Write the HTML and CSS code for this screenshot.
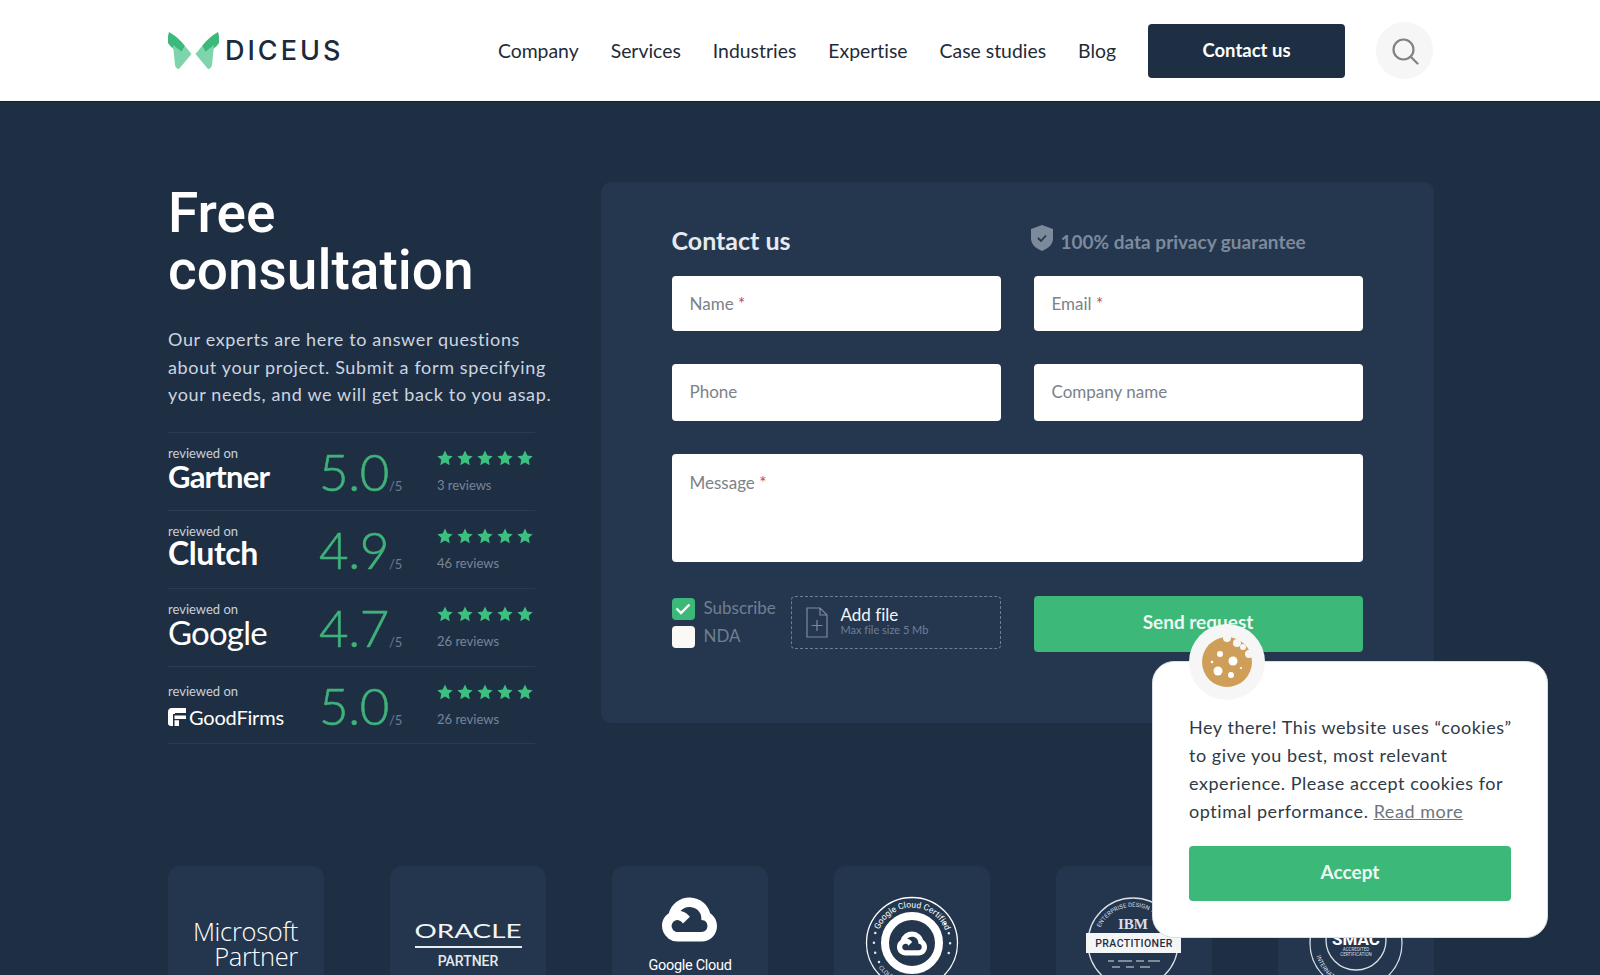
FILE: index.html
```html
<!DOCTYPE html>
<html lang="en">
<head>
<meta charset="utf-8">
<title>DICEUS - Free consultation</title>
<link rel="stylesheet" href="styles.css">
</head>
<body>
<svg class="defs" width="0" height="0" aria-hidden="true">
  <defs>
    <symbol id="star" viewBox="0 0 24 24"><path d="M12 .8l3.500 7.400 8 1-5.900 5.600 1.500 8L12 18.900l-7.100 3.900 1.500-8L.5 9.200l8-1z"/></symbol>
    <symbol id="gcloud" viewBox="0 2.300 24 19.400">
      <path fill="#fff" fill-rule="evenodd" d="M12.190 2.380a9.344 9.344 0 0 0-9.234 6.893c.053-.02-.055.013 0 0-3.875 2.551-3.922 8.110-.247 10.941l.006-.007-.007.030a6.717 6.717 0 0 0 4.077 1.356h5.173l.030.030h5.192c6.687.053 9.376-8.605 3.835-12.350a9.365 9.365 0 0 0-2.821-4.552l-.043.043.006-.050A9.344 9.344 0 0 0 12.190 2.380zm-.358 4.146c1.244-.04 2.518.368 3.486 1.150a5.186 5.186 0 0 1 1.862 4.078v.518c3.530-.07 3.530 5.262 0 5.193h-5.193l-.008.009v-.04H6.785a2.590 2.590 0 0 1-1.067-.23h.001a2.597 2.597 0 1 1 3.437-3.437l3.013-3.012A6.747 6.747 0 0 0 8.110 8.240c.018-.01.04-.026.054-.023a5.186 5.186 0 0 1 3.670-1.690z"/>
    </symbol>
  </defs>
</svg>

<header class="site-header">
  <div class="header-row">
    <a class="logo" href="#">
      <svg class="logo-mark" width="51" height="37" viewBox="0 0 51 37" aria-hidden="true">
        <path fill="#3db97c" d="M1 0Q10 5 17 14L14 20Q4 18 0 11Q-.5 5 1 0Z"/>
        <path fill="#7ed5ab" d="M5 13L14 20L17 14L23.500 22L11 37Q8 37 7 33Z"/>
        <path fill="#3db97c" d="M50 0Q41 5 34 14L37 20Q47 18 51 11Q51.500 5 50 0Z"/>
        <path fill="#7ed5ab" d="M46 13L37 20L34 14L27.500 22L40 37Q43 37 44 33Z"/>
      </svg>
      <span class="logo-text">DICEUS</span>
    </a>
    <nav class="main-nav">
      <a href="#">Company</a>
      <a href="#">Services</a>
      <a href="#">Industries</a>
      <a href="#">Expertise</a>
      <a href="#">Case studies</a>
      <a href="#">Blog</a>
    </nav>
    <a class="header-cta" href="#">Contact us</a>
    <button class="search-btn" type="button" aria-label="Search">
      <svg width="28" height="28" viewBox="0 0 28 28" fill="none" stroke="#7f8287" stroke-width="2.200" stroke-linecap="round" aria-hidden="true"><circle cx="12.500" cy="12.500" r="10"/><path d="M20 20l6.500 6.500"/></svg>
    </button>
  </div>
</header>

<main class="container">
  <section class="hero">
    <div class="intro">
      <h1>Free<br>consultation</h1>
      <p class="lead">Our experts are here to answer questions about your project. Submit a form specifying your needs, and we will get back to you asap.</p>
      <ul class="ratings">
        <li class="rating">
          <div class="brand"><small>reviewed on</small><strong class="brand-gartner">Gartner</strong></div>
          <div class="score">5.0<span>/5</span></div>
          <div class="stars-col"><div class="stars"><svg><use href="#star"/></svg><svg><use href="#star"/></svg><svg><use href="#star"/></svg><svg><use href="#star"/></svg><svg><use href="#star"/></svg></div><span class="count">3 reviews</span></div>
        </li>
        <li class="rating">
          <div class="brand"><small>reviewed on</small><strong class="brand-clutch">Clutch</strong></div>
          <div class="score">4.9<span>/5</span></div>
          <div class="stars-col"><div class="stars"><svg><use href="#star"/></svg><svg><use href="#star"/></svg><svg><use href="#star"/></svg><svg><use href="#star"/></svg><svg><use href="#star"/></svg></div><span class="count">46 reviews</span></div>
        </li>
        <li class="rating">
          <div class="brand"><small>reviewed on</small><strong class="brand-google">Google</strong></div>
          <div class="score">4.7<span>/5</span></div>
          <div class="stars-col"><div class="stars"><svg><use href="#star"/></svg><svg><use href="#star"/></svg><svg><use href="#star"/></svg><svg><use href="#star"/></svg><svg><use href="#star"/></svg></div><span class="count">26 reviews</span></div>
        </li>
        <li class="rating">
          <div class="brand brand-low"><small>reviewed on</small><strong class="brand-goodfirms"><svg width="18" height="18" viewBox="0 0 18 18" aria-hidden="true"><path fill="#fff" d="M4 0h14v5H7v2h11v4H11v7H3a3 3 0 0 1-3-3V4a4 4 0 0 1 4-4z"/><path fill="#1f2f43" d="M5 6h13v1.500H6.500V11H12v1.300H6.500V18H5z"/></svg>GoodFirms</strong></div>
          <div class="score">5.0<span>/5</span></div>
          <div class="stars-col"><div class="stars"><svg><use href="#star"/></svg><svg><use href="#star"/></svg><svg><use href="#star"/></svg><svg><use href="#star"/></svg><svg><use href="#star"/></svg></div><span class="count">26 reviews</span></div>
        </li>
      </ul>
    </div>

    <form class="contact-card">
      <div class="contact-head">
        <h2>Contact us</h2>
        <p class="privacy">
          <svg width="22" height="26" viewBox="0 0 22 26" aria-hidden="true"><path fill="#7c8a9c" d="M11 0l11 4v9c0 6-4 10-11 13C4 23 0 19 0 13V4z"/><path fill="none" stroke="#24374f" stroke-width="1.800" d="M7 13l3 3 5-5.500"/></svg>
          <span>100% data privacy guarantee</span>
        </p>
      </div>
      <div class="fields">
        <label class="field"><span>Name <em>*</em></span></label>
        <label class="field"><span>Email <em>*</em></span></label>
        <label class="field field-b"><span>Phone</span></label>
        <label class="field field-b"><span>Company name</span></label>
        <label class="field field-message"><span>Message <em>*</em></span></label>
        <div class="form-extras">
          <div class="checks">
            <label class="check"><span class="box box-on"><svg width="16" height="12" viewBox="0 0 16 12" fill="none" stroke="#fff" stroke-width="2.400" aria-hidden="true"><path d="M1.500 5.500l4.500 4.500 8.500-8.500"/></svg></span><span class="check-label">Subscribe</span></label>
            <label class="check"><span class="box"></span><span class="check-label">NDA</span></label>
          </div>
          <div class="add-file">
            <svg width="22" height="31" viewBox="0 0 22 31" fill="none" stroke="#7c8a9c" stroke-width="1.200" aria-hidden="true"><path d="M1 1h13l7 7v22H1zM14 1v7h7M11 13v11M5.500 18.500h11"/></svg>
            <div class="file-text"><b>Add file</b><small>Max file size 5 Mb</small></div>
          </div>
        </div>
        <button class="send" type="button">Send request</button>
      </div>
    </form>
  </section>

  <section class="partners">
    <div class="tile">
      <svg width="156" height="109" viewBox="0 0 156 109"><text class="t-ms" x="130" y="75" text-anchor="end">Microsoft</text><text class="t-ms" x="130" y="100" text-anchor="end">Partner</text></svg>
    </div>
    <div class="tile">
      <svg width="156" height="109" viewBox="0 0 156 109"><text class="t-oracle" x="78" y="72" text-anchor="middle" textLength="107" lengthAdjust="spacingAndGlyphs">ORACLE</text><rect x="25" y="80" width="107" height="2" fill="#e8edf2"/><text class="t-partner" x="78" y="100" text-anchor="middle">PARTNER</text></svg>
    </div>
    <div class="tile">
      <svg width="156" height="109" viewBox="0 0 156 109"><use href="#gcloud" x="50" y="31" width="55" height="45"/><text class="t-gc" x="78" y="104" text-anchor="middle">Google Cloud</text></svg>
    </div>
    <div class="tile">
      <svg width="156" height="109" viewBox="0 0 156 109">
        <defs>
          <path id="arc-a" d="M78 112.500a35.500 35.500 0 1 1 .1 0"/>
          <path id="arc-a2" d="M38 88a41.500 41.500 0 0 0 80 0"/>
        </defs>
        <circle class="ring" cx="78" cy="77" r="45.500"/>
        <circle cx="78" cy="77" r="27" fill="none" stroke="#fff" stroke-width="8"/>
        <path class="dots" d="M45 96A38 38 0 0 1 45 58"/>
        <path class="dots" d="M111 58A38 38 0 0 1 111 96"/>
        <text class="t-arc"><textPath href="#arc-a" startOffset="31%">Google Cloud Certified</textPath></text>
        <text class="t-arc2"><textPath href="#arc-a2" startOffset="14%">CLOUD ENGINEER</textPath></text>
        <use href="#gcloud" x="63" y="65" width="30" height="25"/>
      </svg>
    </div>
    <div class="tile">
      <svg width="156" height="109" viewBox="0 0 156 109">
        <defs><path id="arc-b" d="M43 65A36 36 0 0 1 111 65"/></defs>
        <circle class="ring ring-b" cx="77" cy="77" r="45"/>
        <text class="t-arc2"><textPath href="#arc-b" startOffset="4%">ENTERPRISE DESIGN THINKING</textPath></text>
        <text class="t-ibm" x="77" y="63" text-anchor="middle">IBM</text>
        <rect x="30" y="67" width="95" height="20" fill="#f3f5f7"/>
        <text class="t-prac" x="78" y="81" text-anchor="middle">PRACTITIONER</text>
        <path class="dash" d="M52 95h6M62 95h14M80 95h8M92 95h12M56 101h8M70 101h8M84 101h10"/>
      </svg>
    </div>
    <div class="tile">
      <svg width="156" height="109" viewBox="0 0 156 109">
        <defs><path id="arc-c" d="M38 88a41 41 0 0 0 80 0"/></defs>
        <circle class="ring ring-b" cx="78" cy="77" r="46"/>
        <circle class="ring ring-b" cx="78" cy="74" r="30"/>
        <text class="t-smac" x="78" y="79" text-anchor="middle">SMAC</text>
        <text class="t-mini" x="78" y="85" text-anchor="middle">ACCREDITED</text>
        <text class="t-mini" x="78" y="90" text-anchor="middle">CERTIFICATION</text>
        <text class="t-arc2"><textPath href="#arc-c" startOffset="2%">INTERNATIONAL INSTITUTE</textPath></text>
      </svg>
    </div>
  </section>
</main>

<aside class="cookie">
  <div class="cookie-badge">
    <svg width="50" height="50" viewBox="0 0 50 50" aria-hidden="true">
      <circle cx="25" cy="25" r="25" fill="#cf9f59"/>
      <g fill="#f6f6f6"><circle cx="25" cy="1" r="4"/><circle cx="35" cy="6" r="4"/><circle cx="41" cy="10" r="3"/><circle cx="47" cy="17" r="4"/></g>
      <g fill="#fff"><circle cx="18" cy="17" r="3"/><circle cx="31" cy="24" r="4.500"/><circle cx="16" cy="34" r="4.500"/><circle cx="29" cy="38" r="3"/><circle cx="10" cy="25" r="1.300"/><circle cx="39" cy="31" r="1.100"/></g>
    </svg>
  </div>
  <p>Hey there! This website uses “cookies” to give you best, most relevant experience. Please accept cookies for optimal performance. <a href="#">Read more</a></p>
  <button class="accept" type="button">Accept</button>
</aside>
</body>
</html>
```
FILE: styles.css
```css
* { box-sizing: border-box; }
html, body { margin: 0; height: 975px; overflow: hidden; }
body {
  background: #1f2f43;
  color: #fff;
  font-family: "Lato", sans-serif;
  font-variant-ligatures: none;
}
a { color: inherit; text-decoration: none; }
.defs { position: absolute; }
.container { width: 1266px; margin: 0 0 0 168px; }

.site-header {
  background: #fff;
  height: 102px;
  border-bottom: 1px solid #141d29;
}
.header-row {
  display: flex;
  align-items: center;
  width: 1265px;
  height: 101px;
  margin-left: 168px;
}
.logo { display: flex; align-items: center; gap: 6px; }
.logo-text {
  font-family: "Inter", sans-serif;
  font-weight: 500;
  font-size: 27px;
  letter-spacing: 3px;
  color: #1b2a3c;
}
.main-nav {
  margin-left: auto;
  display: flex;
  gap: 32px;
  font-size: 19.400px;
  color: #1f2b38;
}
.header-cta {
  margin-left: 32px;
  width: 197px;
  height: 54px;
  padding-bottom: 2px;
  display: flex;
  align-items: center;
  justify-content: center;
  background: #1f2f43;
  color: #fff;
  border-radius: 4px;
  font-weight: 700;
  font-size: 18.500px;
}
.search-btn {
  margin-left: 31px;
  width: 57px;
  height: 57px;
  border: 0;
  border-radius: 50%;
  background: #f6f6f6;
  display: flex;
  align-items: center;
  justify-content: center;
  padding: 0;
}

.hero {
  display: grid;
  grid-template-columns: 433px 833px;
  padding-top: 80px;
}
.intro h1 {
  margin: 3px 0 0;
  font-family: "Roboto", sans-serif;
  font-weight: 500;
  font-size: 55px;
  line-height: 57px;
  color: #fff;
}
.lead {
  margin: 27px 0 0;
  width: 392px;
  font-size: 18px;
  line-height: 27.500px;
  color: #ccd5e0;
  letter-spacing: .65px;
}
.ratings { list-style: none; margin: 23px 0 0; padding: 0; }
.rating {
  width: 367px;
  height: 78px;
  display: flex;
  border-top: 1px solid #2a3c53;
}
.rating:last-child { border-bottom: 1px solid #2a3c53; }
.brand { width: 151px; padding-top: 13px; }
.brand-low { padding-top: 17px; }
.brand small {
  display: block;
  font-size: 13px;
  line-height: 15px;
  color: #c8d0da;
}
.brand strong {
  display: flex;
  align-items: center;
  gap: 3px;
  color: #fff;
  font-size: 31px;
  line-height: 31px;
  font-weight: 700;
  letter-spacing: -.8px;
}
.brand .brand-clutch { font-size: 32px; line-height: 28px; letter-spacing: -.4px; }
.brand .brand-google { font-weight: 400; font-size: 33px; line-height: 30px; }
.brand .brand-goodfirms { font-size: 20px; font-weight: 400; line-height: 36px; letter-spacing: -.2px; }
.score {
  width: 118px;
  font-weight: 300;
  font-size: 51px;
  line-height: 78px;
  color: #3fb27a;
  letter-spacing: -.4px;
  -webkit-text-stroke: .6px #3fb27a;
}
.score span { font-size: 13px; color: #6d7c8e; font-weight: 400; letter-spacing: 0; -webkit-text-stroke: 0; }
.stars-col { padding-top: 17px; }
.stars { display: flex; gap: 4px; fill: #3cc080; height: 16px; }
.stars svg { width: 16px; height: 16px; }
.count {
  display: block;
  margin-top: 11px;
  font-size: 13px;
  line-height: 16px;
  color: #76859a;
}

.contact-card {
  height: 541px;
  background: #24374f;
  border-radius: 10px;
  padding: 0 70.500px;
  width: 833px;
}
.contact-head {
  height: 94px;
  display: grid;
  grid-template-columns: 329px 329px;
  column-gap: 33px;
  padding-top: 40px;
}
.contact-head h2 {
  margin: 0;
  font-weight: 700;
  font-size: 25px;
  line-height: 36px;
  color: #e6eaef;
}
.privacy {
  margin: 0 0 0 -3px;
  display: flex;
  align-items: center;
  gap: 8px;
  height: 32px;
  font-weight: 700;
  font-size: 19px;
  color: #7c8a9c;
}
.privacy span { padding-top: 6px; }
.fields {
  display: grid;
  grid-template-columns: 329px 329px;
  gap: 33.500px 33px;
}
.field {
  display: flex;
  align-items: center;
  height: 55px;
  padding: 0 18px 1px;
  background: #fff;
  border-radius: 4px;
  font-size: 17px;
  color: #7b8289;
}
.field em { color: #c2485a; font-style: normal; }
.field-b { height: 56.500px; margin-top: -.5px; }
.field-message {
  grid-column: 1 / 3;
  height: 108px;
  align-items: flex-start;
  padding-top: 18px;
}
.form-extras { display: flex; gap: 16px; }
.checks { width: 103px; display: flex; flex-direction: column; gap: 6px; padding-top: 2px; }
.check {
  display: flex;
  align-items: center;
  gap: 9px;
  height: 22px;
  font-size: 17px;
  color: #6f7f92;
}
.check-label { margin-top: -3px; }
.box {
  flex: none;
  width: 23px;
  height: 22px;
  border-radius: 4px;
  background: #fbf9f6;
  display: flex;
  align-items: center;
  justify-content: center;
}
.box-on { background: #3cb878; }
.add-file {
  flex: 1;
  height: 53px;
  border: 1px dashed #6f7f92;
  border-radius: 4px;
  display: flex;
  align-items: center;
  gap: 13px;
  padding: 0 0 0 14px;
}
.file-text { margin-top: -4px; }
.file-text b {
  display: block;
  font-weight: 400;
  font-size: 17px;
  line-height: 18px;
  color: #f3f5f7;
}
.file-text small {
  display: block;
  font-size: 11px;
  line-height: 11px;
  color: #6f7f92;
}
.send, .accept {
  border: 0;
  border-radius: 4px;
  background: #3cb878;
  color: #eef8f2;
  font-family: "Lato", sans-serif;
  font-variant-ligatures: none;
  font-weight: 700;
  font-size: 19px;
  padding: 0 0 5px;
}
.send { height: 56px; }

.partners {
  display: flex;
  justify-content: space-between;
  margin-top: 122px;
}
.tile {
  width: 156px;
  height: 109px;
  background: #24364d;
  border-radius: 12px 12px 0 0;
  flex: none;
}
.tile svg { display: block; }
.t-ms { font-family: "Open Sans", sans-serif; font-weight: 300; font-size: 25.500px; fill: #fff; letter-spacing: -.3px; }
.t-oracle { font-size: 19px; fill: #f2f4f6; }
.t-partner { font-family: "Roboto", sans-serif; font-weight: 500; font-size: 14px; fill: #e5e9ee; }
.t-gc { font-family: "Roboto", sans-serif; font-size: 14.500px; fill: #fff; letter-spacing: -.3px; }
.ring { fill: none; stroke: #fff; stroke-width: 1.300; }
.ring-b { stroke: #d9dfe6; }
.dots { fill: none; stroke: #e5e9ee; stroke-width: 2.500; stroke-linecap: round; stroke-dasharray: 0 10; }
.dash { fill: none; stroke: #d9dfe6; stroke-width: 1.200; }
.t-arc { font-family: "Roboto", sans-serif; font-size: 8.500px; fill: #fff; }
.t-arc2 { font-family: "Roboto", sans-serif; font-size: 6px; fill: #d9dfe6; }
.t-mini { font-family: "Roboto", sans-serif; font-size: 4.500px; fill: #d9dfe6; }
.t-ibm { font-family: "Liberation Serif", serif; font-weight: 700; font-size: 15px; fill: #d9dfe6; }
.t-prac { font-family: "Roboto", sans-serif; font-weight: 500; font-size: 10.500px; fill: #1f2f43; letter-spacing: .4px; }
.t-smac { font-family: "Roboto", sans-serif; font-weight: 700; font-size: 17px; fill: #fff; }

.cookie {
  position: fixed;
  left: 1152px;
  top: 661px;
  width: 396px;
  height: 277px;
  background: #fff;
  border: 1px solid #d8dee5;
  border-radius: 22px;
  padding: 51px 36px 0;
}
.cookie-badge {
  position: absolute;
  left: 36px;
  top: -38px;
  width: 76px;
  height: 76px;
  border-radius: 50%;
  background: #f6f6f6;
  display: flex;
  align-items: center;
  justify-content: center;
}
.cookie p {
  margin: 0 -8px 0 0;
  font-size: 18px;
  line-height: 28px;
  color: #2f3a47;
  letter-spacing: .55px;
}
.cookie p a { color: #6e757e; text-decoration: underline; }
.accept { display: block; width: 322px; height: 55px; margin-top: 21px; }
```
